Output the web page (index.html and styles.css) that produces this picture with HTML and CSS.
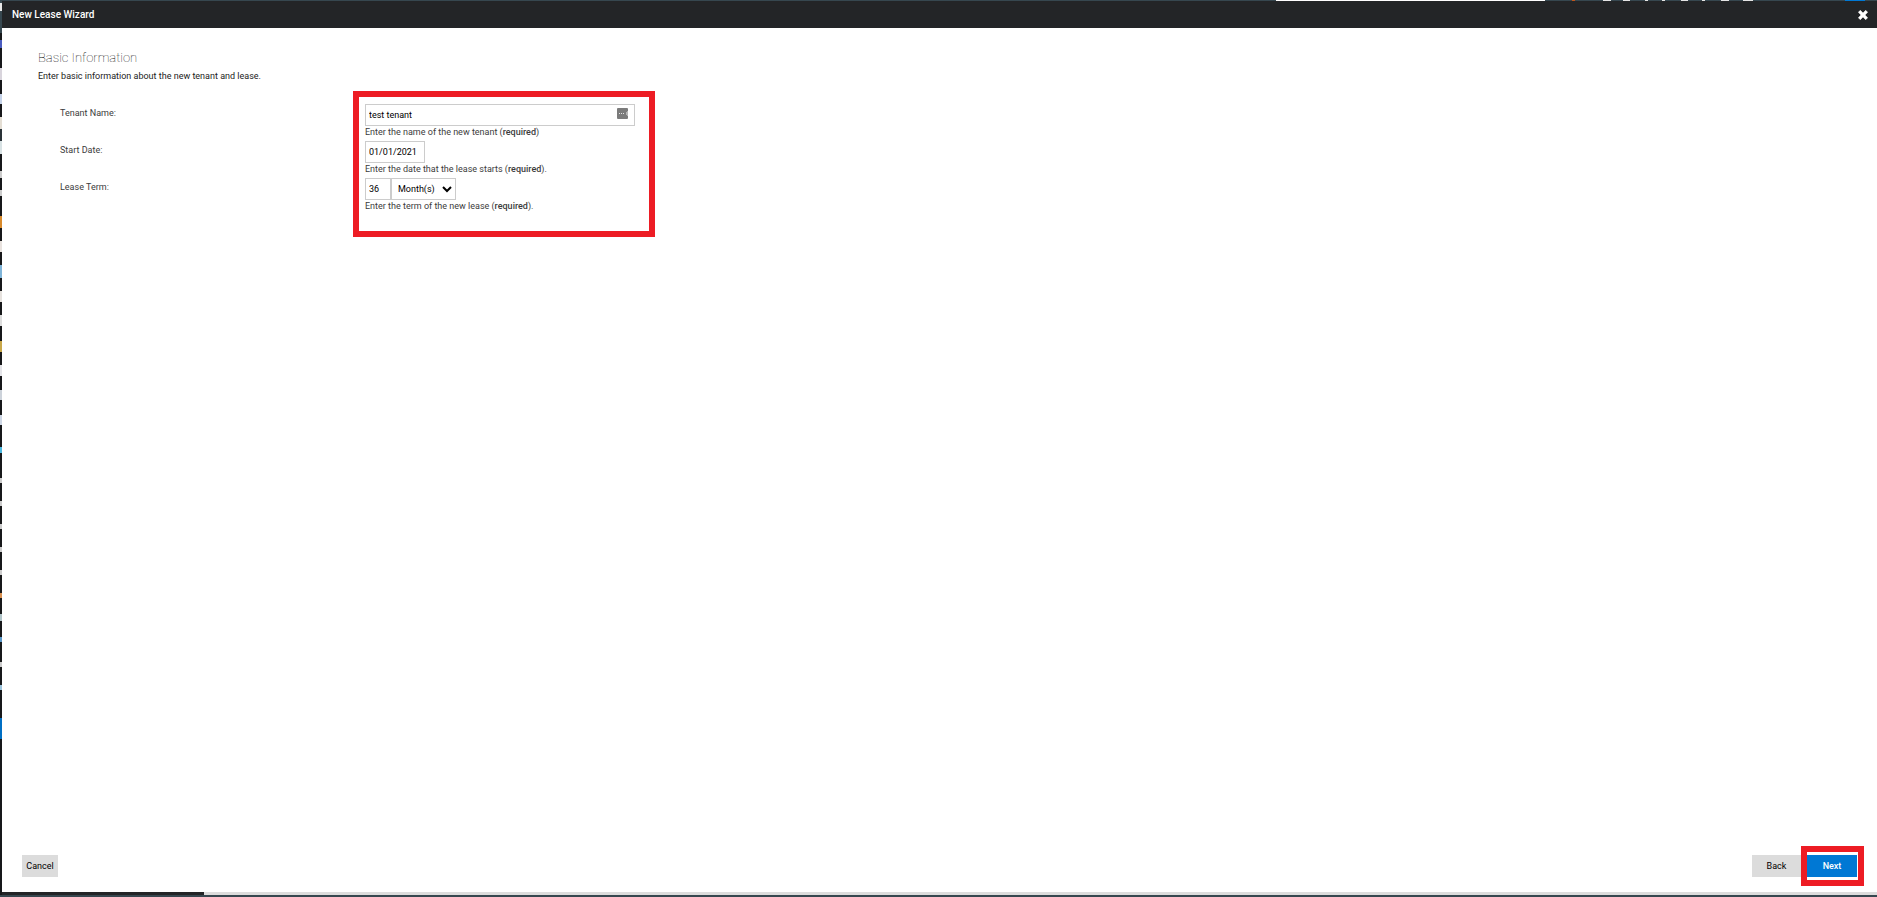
FILE: index.html
```html
<!DOCTYPE html>
<html lang="en">
  <head>
    <meta charset="utf-8">
    <title>New Lease Wizard</title>
    <link rel="stylesheet" href="styles.css">
  </head>
  <body>
    <div class="page-edge"></div>
    <div class="wizard">
      <header class="titlebar">
        <span>New Lease Wizard</span>
        <button class="close" type="button" aria-label="Close">
          <svg width="10" height="10" viewBox="0 0 10 10">
            <path d="M2.3 0.3 5 3 7.7 0.3 9.7 2.3 7 5 9.7 7.7 7.7 9.7 5 7 2.3 9.7 0.3 7.7 3 5 0.3 2.3Z" fill="#fff" stroke="#fff" stroke-width="0.5" stroke-linejoin="round"/>
          </svg>
        </button>
      </header>

      <main class="content">
        <h1>Basic Information</h1>
        <p class="intro">Enter basic information about the new tenant and lease.</p>

        <form class="form" id="lease">
          <label for="tenant">Tenant Name:</label>
          <div class="field">
            <div class="tenant">
              <input class="tenant-input" id="tenant" type="text" value="test tenant">
              <svg class="fill-icon" width="12" height="11" viewBox="0 0 12 11">
                <rect width="11" height="11" rx="1" fill="#7b7b7b"/>
                <path d="M2 5h1v1H2zM4 5h1v1H4zM6 5h1v1H6z" fill="#e4e4e4"/>
                <path d="M9 4h1V3h1v5h-1V7H9z" fill="#b5b5b5"/>
              </svg>
            </div>
            <div class="hint">Enter the name of the new tenant (<b>required</b>)</div>
          </div>

          <label for="start">Start Date:</label>
          <div class="field">
            <input class="date-input" id="start" type="text" value="01/01/2021">
            <div class="hint">Enter the date that the lease starts (<b>required</b>).</div>
          </div>

          <label for="term">Lease Term:</label>
          <div class="field">
            <div class="term">
              <input class="term-input" id="term" type="text" value="36">
              <select class="term-unit" aria-label="Term unit">
                <option>Month(s)</option>
                <option>Year(s)</option>
              </select>
            </div>
            <div class="hint">Enter the term of the new lease (<b>required</b>).</div>
          </div>

          <div class="highlight"></div>
        </form>
      </main>

      <footer class="actions">
        <button class="btn" type="button">Cancel</button>
        <div class="nav">
          <button class="btn back" type="button">Back</button>
          <div class="next-highlight">
            <button class="btn next" type="submit" form="lease">Next</button>
          </div>
        </div>
      </footer>

      <div class="progress"><div class="progress-bar"></div></div>
    </div>
  </body>
</html>
```

FILE: styles.css
```css
* {
  box-sizing: border-box;
}

body {
  margin: 0;
  min-height: 100vh;
  display: flex;
  /* the row above the dialog shows the search box and toolbar icons behind it */
  background: #36474f linear-gradient(
    to left,
    transparent 12px, #0078d4 12px 32px, transparent 32px 124px,
    #e4e4e4 124px 134px, transparent 134px 148px,
    #e4e4e4 148px 156px, transparent 156px 172px,
    #e4e4e4 172px 175px, transparent 175px 189px,
    #e4e4e4 189px 196px, transparent 196px 212px,
    #e4e4e4 212px 215px, transparent 215px 229px,
    #e4e4e4 229px 232px, transparent 232px 247px,
    #e4e4e4 247px 254px, transparent 254px 266px,
    #e4e4e4 266px 274px, transparent 274px 302px,
    #c0561c 302px 305px, transparent 305px 332px,
    #fff 332px 601px, transparent 601px
  ) top / 100% 1px no-repeat;
  font-family: Roboto, Arial, sans-serif;
  font-size: 9px;
  line-height: 12px;
  color: #3c3c3c;
}

/* strip of the page behind the dialog */
.page-edge {
  width: 2px;
  margin-bottom: 2px;
  background: linear-gradient(
    #36474f 0 3px, #e8e8e8 3px 11px, #36474f 11px 33px,
    #17181a 33px 40px, #4a5cc0 40px 48px, #17181a 48px 68px,
    #d8d4dc 68px 80px, #17181a 80px 94px, #c5d2e8 94px 104px,
    #17181a 104px 117px, #e4ded4 117px 129px, #2a3238 129px 141px,
    #d8e2e4 141px 154px, #17181a 154px 171px, #ccc 171px 178px,
    #17181a 178px 190px, #ccc 190px 196px, #17181a 196px 216px,
    #d88a2c 216px 228px, #17181a 228px 241px, #e8e2de 241px 252px,
    #17181a 252px 265px, #7fb4d8 265px 278px, #17181a 278px 291px,
    #e6e2de 291px 302px, #17181a 302px 315px, #ddd 315px 326px,
    #17181a 326px 341px, #c9a84a 341px 352px, #17181a 352px 365px,
    #e4e4e8 365px 376px, #17181a 376px 390px, #ccd2da 390px 400px,
    #17181a 400px 415px, #cdd6e4 415px 425px, #17181a 425px 447px,
    #4ab8e0 447px 453px, #17181a 453px 478px, #ccc 478px 483px,
    #17181a 483px 501px, #ccc 501px 506px, #17181a 506px 524px,
    #ccc 524px 529px, #17181a 529px 547px, #ccc 547px 552px,
    #17181a 552px 570px, #ccc 570px 575px, #17181a 575px 593px,
    #d89050 593px 598px, #17181a 598px 614px, #b0c4c8 614px 621px,
    #17181a 621px 637px, #5a98c8 637px 642px, #17181a 642px 662px,
    #ccc 662px 667px, #17181a 667px 685px, #9cc4dc 685px 690px,
    #17181a 690px 718px, #006fc4 718px 739px, #17181a 739px
  );
}

.wizard {
  flex: 1;
  display: flex;
  flex-direction: column;
  margin: 1px 0 2px;
  background: #fff;
}

.titlebar {
  display: flex;
  justify-content: space-between;
  align-items: center;
  height: 27px;
  padding: 0 9px 0 10px;
  background: #232527;
  color: #fff;
  font-size: 10px;
  font-weight: 500;
}

.close {
  display: flex;
  padding: 0;
  border: 0;
  background: none;
}

.content {
  flex: 1;
  padding: 20px 36px;
}

h1 {
  margin: 0;
  font-size: 13px;
  font-weight: 100;
  line-height: 20px;
  color: #000;
}

.intro {
  margin: 2px 0 22px;
  color: #222;
}

.form {
  position: relative;
  display: grid;
  grid-template-columns: 305px 270px;
  grid-auto-rows: 37px;
  padding-left: 22px;
}

.form label {
  grid-column: 1;
  padding-top: 3px;
}

.field {
  grid-column: 2;
}

input,
select {
  display: block;
  height: 22px;
  margin: 0;
  padding: 0 3px;
  border: 1px solid #ccc;
  border-radius: 0;
  background: #fff;
  color: #000;
  font: inherit;
}

.tenant {
  position: relative;
}

.tenant-input {
  width: 100%;
}

.fill-icon {
  position: absolute;
  top: 4px;
  right: 6px;
}

.date-input {
  width: 60px;
}

.term {
  display: flex;
}

.term-input {
  width: 26px;
}

.term-unit {
  width: 65px;
  padding: 0 3px 0 2px;
}

.hint b {
  font-weight: 500;
}

/* frame drawn around all the fields */
.highlight {
  position: absolute;
  inset: -13px -20px -22px -12px;
  grid-column: 2 / 3;
  border: 6px solid #ed1c24;
  pointer-events: none;
}

.actions {
  display: flex;
  justify-content: space-between;
  align-items: center;
  padding: 0 13px 6px 20px;
}

.nav {
  display: flex;
  align-items: center;
}

.btn {
  min-width: 36px;
  height: 22px;
  padding: 0 4px;
  border: 0;
  background: #dcdcdc;
  color: #000;
  font: inherit;
}

.back {
  width: 49px;
}

.next-highlight {
  padding: 3px 1px 3px 0;
  border: 6px solid #ed1c24;
}

.next {
  display: block;
  width: 50px;
  background: #0078d4;
  color: #fff;
  font-weight: 500;
}

.progress {
  height: 3px;
  background: #dcdcdc;
}

.progress-bar {
  width: 202px;
  height: 100%;
  background: #232527;
}
```
